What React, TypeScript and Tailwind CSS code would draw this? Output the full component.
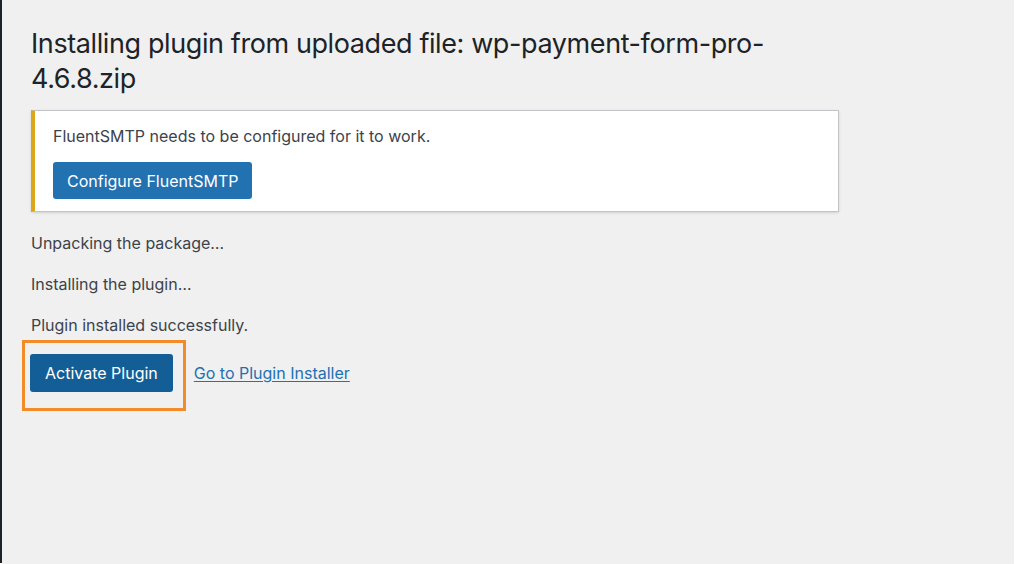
export default function App() {
  return (
    <div className="flex h-[564px] w-[1024px] bg-white" style={{ fontFamily: "Inter, 'Noto Sans', sans-serif" }}>
      <div className="w-[2px] h-[563px] bg-[#1d2327]" />
      <main className="w-[1012px] h-full bg-[#f0f0f1] pl-[29px] pt-[26px]">
        <div className="w-[808px]">
          <h1 className="text-[27px] leading-[35px] tracking-[-0.4px] font-normal text-[#1d2327] break-words">
            Installing plugin from uploaded file: wp-payment-form-pro-4.6.8.zip
          </h1>

          <div className="mt-[14px] bg-white border border-[#c3c4c7] border-l-[4px] border-l-[#dba617] pl-[18px] pr-4 pt-[13px] pb-[12px] shadow-sm">
            <p className="text-[16px] leading-[24px] text-[#3c434a]">
              FluentSMTP needs to be configured for it to work.
            </p>
            <button className="mt-[14px] h-[37px] px-[14px] rounded-[3px] bg-[#2271b1] text-white text-[16px]">
              Configure FluentSMTP
            </button>
          </div>

          <div className="mt-[19px] flex flex-col gap-[17px] text-[16px] leading-[24px] text-[#3c434a]">
            <p>Unpacking the package…</p>
            <p>Installing the plugin…</p>
            <p>Plugin installed successfully.</p>
          </div>

          <div className="mt-[3px] flex items-start gap-[8px]">
            <div className="-ml-[9px] border-[3px] border-[#f28c28] pl-[5px] pr-[10px] pt-[11px] pb-[16px]">
              <button className="h-[38px] px-[15px] rounded-[3px] bg-[#135e96] text-white text-[16px]">
                Activate Plugin
              </button>
            </div>
            <a href="#" className="mt-[21px] text-[16px] leading-[24px] text-[#2271b1] underline underline-offset-2">
              Go to Plugin Installer
            </a>
          </div>
        </div>
      </main>
    </div>
  );
}
